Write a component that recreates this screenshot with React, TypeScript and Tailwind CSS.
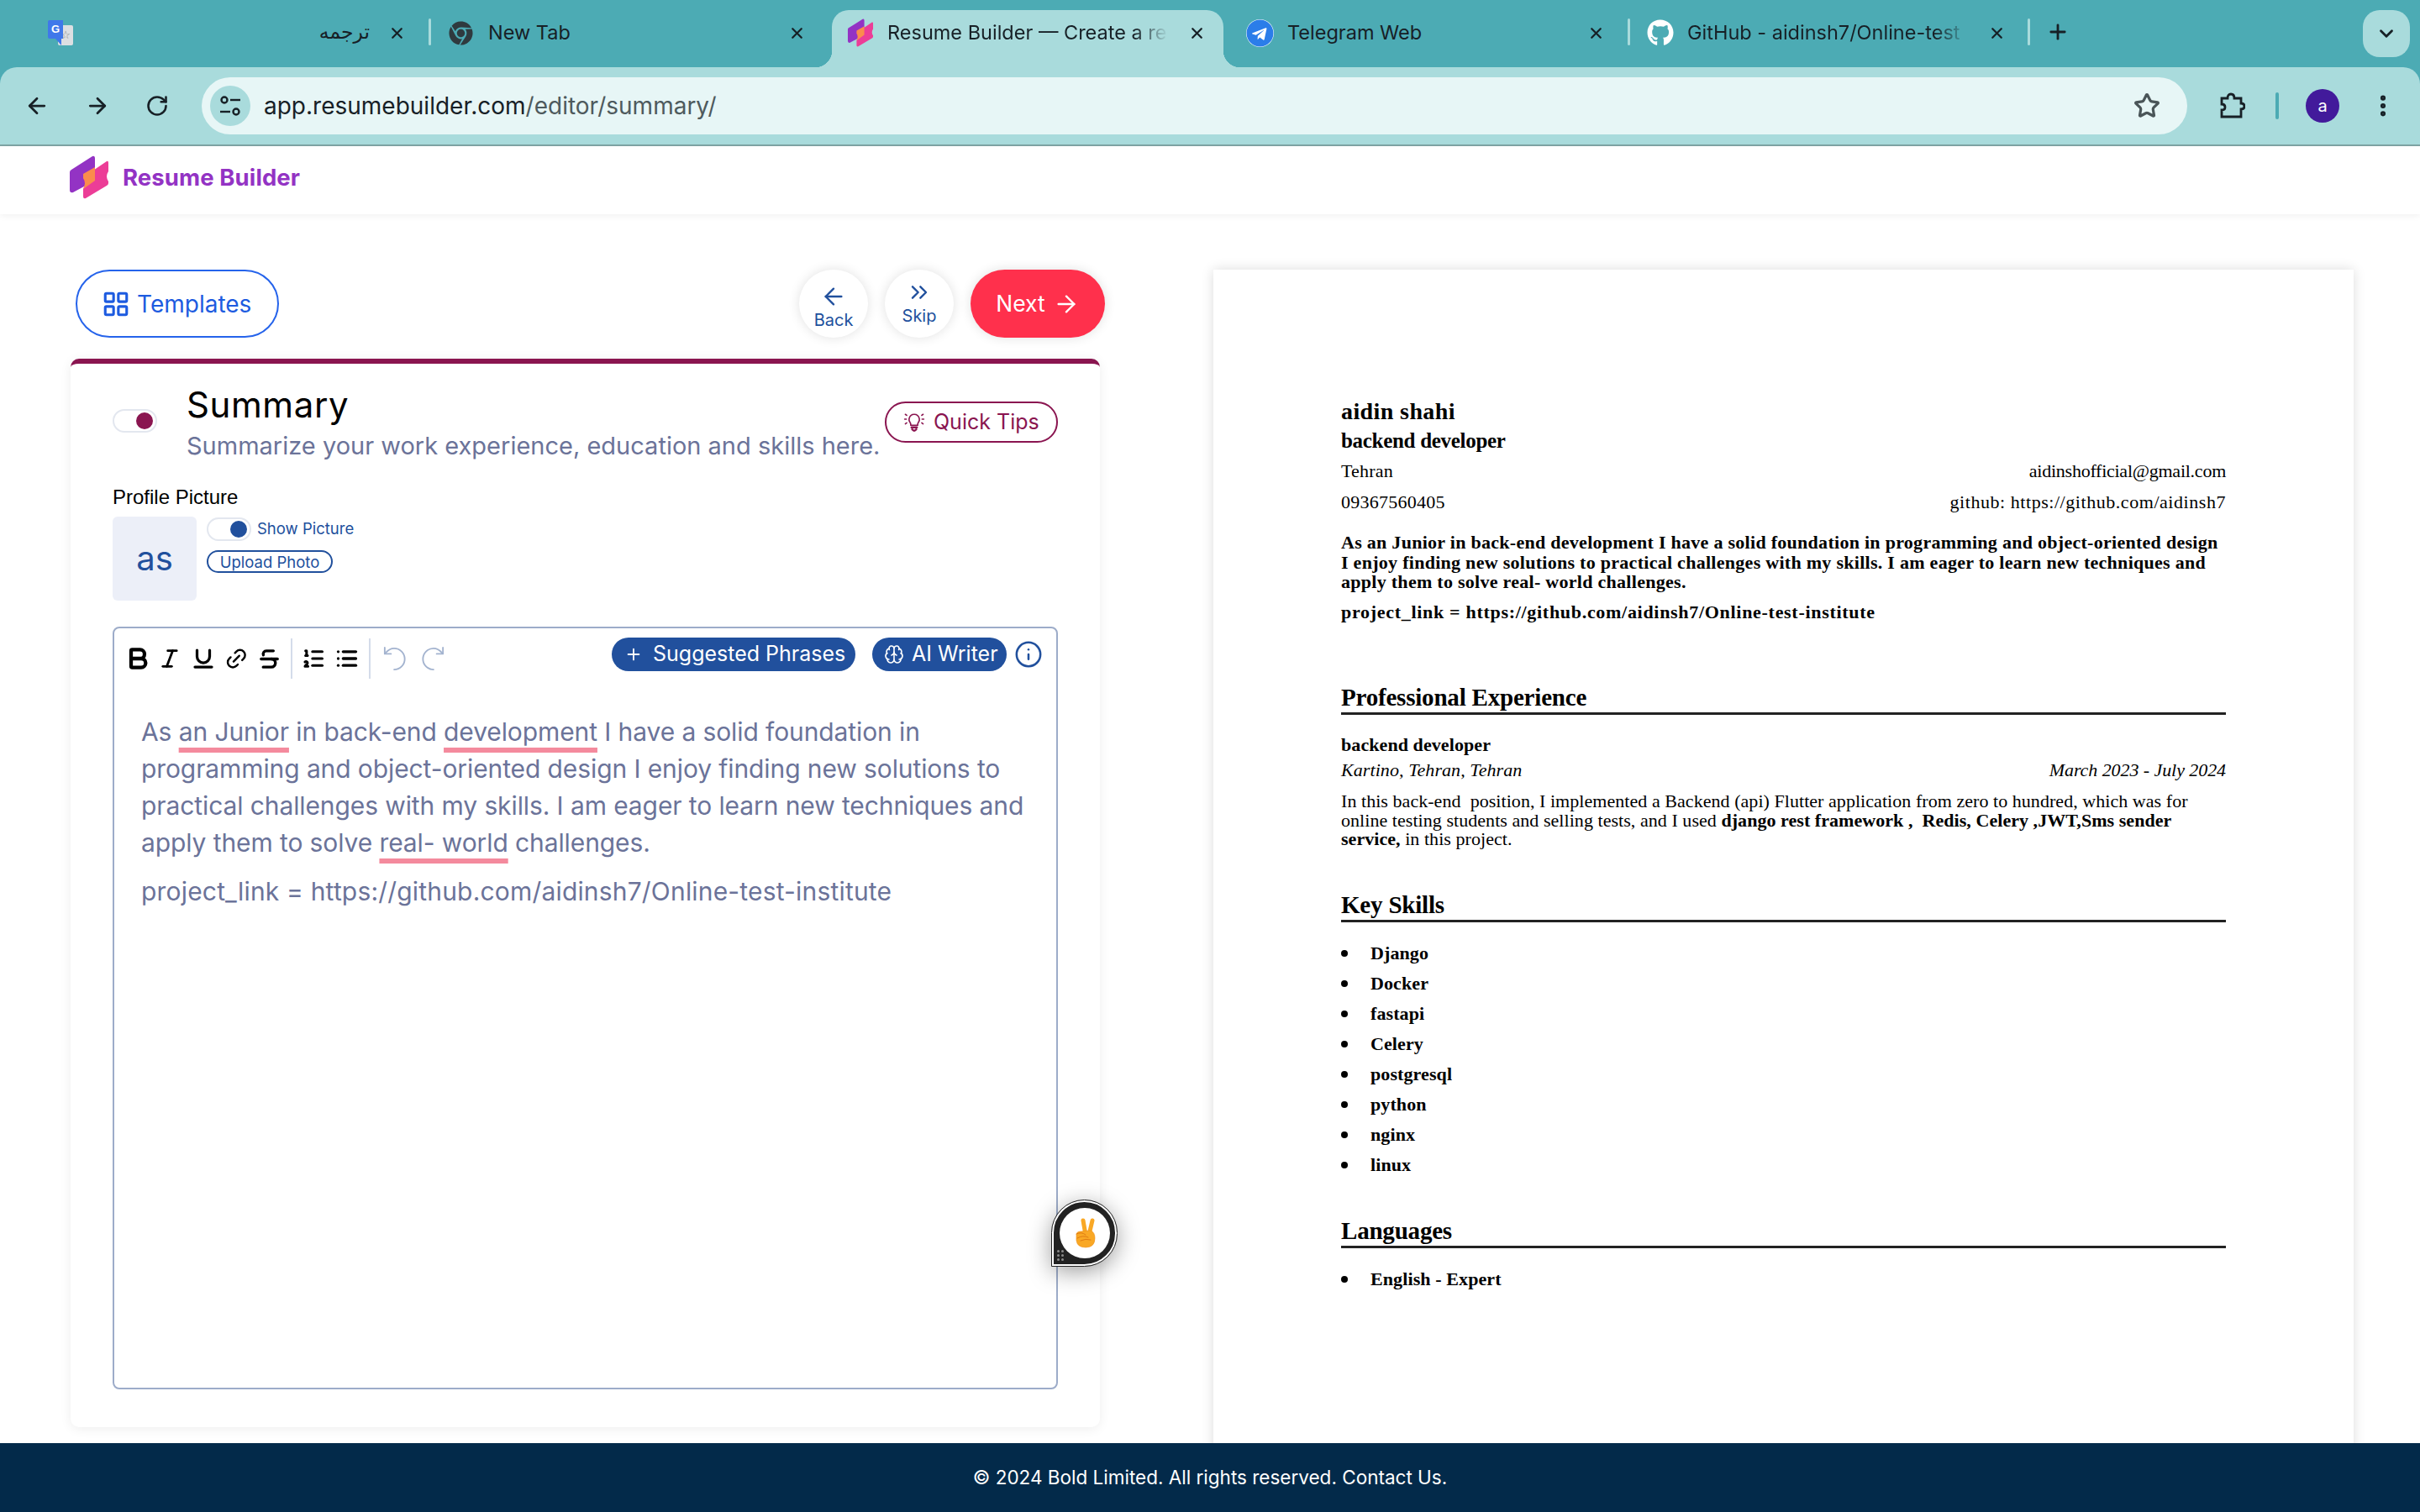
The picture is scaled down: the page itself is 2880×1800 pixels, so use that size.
import { ArrowLeft, ArrowRight, Bold, Brain, ChevronDown, ChevronsRight, Info, Italic, LayoutGrid, Link2, List, ListOrdered, MoreVertical, Plus, RotateCw, Star, Strikethrough, Underline, X } from "lucide-react";
import type { ReactNode } from "react";
import { FaChrome, FaGithub, FaTelegram } from "react-icons/fa";

const sans = "font-['Inter',sans-serif]";
const serif = "font-['Liberation_Serif',serif]";

function Logo({ className }: { className: string }) {
  return (
    <svg viewBox="0 0 46 52" className={className}>
      <path d="M2 17 L27 1 Q30 0 30 4 L30 30 L4 44 Q0 45 0 41 L0 20 Q0 18 2 17Z" fill="#9333c4" />
      <path d="M19 24 L44 7 Q46 6 46 9 L46 19 Q42 25 46 31 L46 33 Q46 35 44 36 L19 51 Q16 52 16 49 L16 40 Q20 34 16 27 Q16 25 19 24Z" fill="#ec3d97" />
      <path d="M16 22 L30 14 L30 30 L16 40 Q20 32 16 27Z" fill="#fb8c4d" />
    </svg>
  );
}

function TranslateIcon() {
  return (
    <svg viewBox="0 0 30 30" className="w-[30px] h-[30px] shrink-0">
      <rect x="12" y="6" width="18" height="24" rx="2" fill="#dcdfe2" />
      <text x="21" y="22" fontSize="13" textAnchor="middle" fill="#7d8a8c" fontFamily="DejaVu Sans">☆</text>
      <path d="M2 0 H18 V22 H16 L16 30 L9 22 H2 Q0 22 0 20 V2 Q0 0 2 0Z" fill="#3f78ea" />
      <text x="9" y="15" fontSize="13" fontWeight="700" textAnchor="middle" fill="#fff" fontFamily="Liberation Sans">G</text>
    </svg>
  );
}

function BulbIcon() {
  return (
    <svg viewBox="0 0 32 32" className="w-[32px] h-[26px] shrink-0" fill="none" stroke="#8a1550" strokeWidth="2" strokeLinecap="round">
      <path d="M11 20 Q11 17 9.500 15 Q8 13 8.500 10.500 Q10 4 16 4 Q22 4 23.500 10.500 Q24 13 22.500 15 Q21 17 21 20Z" />
      <path d="M12 23 H20 M13 26 Q16 30 19 26" strokeWidth="3" />
      <path d="M2 11 H4.500 M3 4 L5 5.500 M3 18 L5 16.500 M27.500 11 H30 M27 5.500 L29 4 M27 16.500 L29 18" />
    </svg>
  );
}

function UndoIcon({ flip }: { flip?: boolean }) {
  return (
    <svg viewBox="0 0 32 30" className={`w-[32px] h-[28px] shrink-0 ${flip ? "-scale-x-100" : ""}`} fill="none" stroke="#a3b3cf" strokeWidth="2" strokeLinecap="round" strokeLinejoin="round">
      <path d="M15 29 A13.500 13.500 0 0 0 15 2 Q9 2 4 8" />
      <path d="M3 1 V9 H11" />
    </svg>
  );
}

function Sep() {
  return <span className="w-[3px] h-[32px] bg-[#a9dbdc] rounded shrink-0" />;
}

function Tab({ icon, title, width, closeGap, iconPad, textGap, rtl, fade }: { icon: ReactNode; title: string; width: string; closeGap: string; iconPad: string; textGap: string; rtl?: boolean; fade?: boolean }) {
  return (
    <div className={`${width} ${iconPad} h-[68px] pb-[14px] flex items-center shrink-0`}>
      {icon}
      <span className={`${textGap} flex-1 min-w-0 whitespace-nowrap text-[23.5px] text-[#172026] ${rtl ? "text-right font-['DejaVu_Sans',sans-serif] text-[20px] pr-[10px]" : ""} ${fade ? "[mask-image:linear-gradient(to_right,black_88%,transparent)]" : ""}`}>
        {title}
      </span>
      <X size={21} strokeWidth={2.6} className={`${closeGap} shrink-0 text-[#172026]`} />
    </div>
  );
}

function TabStrip() {
  return (
    <div className={`${sans} h-[80px] bg-[#4cabb4] flex items-end pl-[40px] shrink-0`}>
      <Tab width="w-[470px]" iconPad="pl-[17px]" textGap="ml-[16px]" closeGap="ml-[12px] mr-[27px]" rtl icon={<TranslateIcon />} title="ترجمه" />
      <div className="h-[68px] pb-[16px] flex items-center"><Sep /></div>
      <Tab width="w-[477px]" iconPad="pl-[21px]" textGap="ml-[18px]" closeGap="mr-[31px]" icon={<FaChrome size={29} className="text-[#2f3a3e] shrink-0" />} title="New Tab" />
      <div className="relative h-[68px] w-[466px] bg-[#a9dbdc] rounded-t-[20px] shrink-0">
        <span className="absolute -left-[20px] bottom-0 w-[20px] h-[20px] bg-[radial-gradient(circle_at_0_0,#4cabb4_20px,#a9dbdc_20.5px)]" />
        <span className="absolute -right-[20px] bottom-0 w-[20px] h-[20px] bg-[radial-gradient(circle_at_100%_0,#4cabb4_20px,#a9dbdc_20.5px)]" />
        <Tab width="w-[466px]" iconPad="pl-[18px]" textGap="ml-[16px]" closeGap="ml-[24px] mr-[21px]" fade icon={<Logo className="w-[32px] h-[34px] shrink-0" />} title="Resume Builder — Create a re" />
      </div>
      <Tab width="w-[481px]" iconPad="pl-[27px]" textGap="ml-[16px]" closeGap="mr-[27px]" icon={<span className="w-[33px] h-[33px] rounded-full bg-white shrink-0 flex items-center justify-center"><FaTelegram size={33} className="text-[#2b7de9]" /></span>} title="Telegram Web" />
      <div className="h-[68px] pb-[16px] flex items-center"><Sep /></div>
      <Tab width="w-[473px]" iconPad="pl-[20px]" textGap="ml-[16px]" closeGap="ml-[24px] mr-[26px]" fade icon={<FaGithub size={32} className="text-white shrink-0" />} title="GitHub - aidinsh7/Online-test" />
      <div className="h-[68px] pb-[16px] flex items-center"><Sep /></div>
      <div className="h-[68px] pb-[16px] flex items-center ml-[19px]"><Plus size={28} strokeWidth={2.4} className="text-[#172026]" /></div>
      <div className="ml-auto mr-[12px] mb-[12px] w-[56px] h-[56px] rounded-[20px] bg-[#a9dbdc] flex items-center justify-center">
        <ChevronDown size={26} strokeWidth={2.6} className="text-[#172026]" />
      </div>
    </div>
  );
}

function AddressBar() {
  return (
    <div className={`${sans} h-[94px] shrink-0 bg-[#4cabb4]`}>
      <div className="h-full bg-[#a9dbdc] border-b-2 border-[#7fa5a5] rounded-t-[20px] flex items-center">
        <div className="w-[240px] pl-[29px] flex items-center gap-[42px] text-[#172026] shrink-0">
          <ArrowLeft size={30} strokeWidth={2.2} />
          <ArrowRight size={30} strokeWidth={2.2} />
          <RotateCw size={28} strokeWidth={2.2} />
        </div>
        <div className="w-[2363px] h-[68px] rounded-full bg-[#e7f6f6] flex items-center pl-[10px] pr-[32px] shrink-0">
          <span className="w-[48px] h-[48px] rounded-full bg-[#a9dbdc] flex items-center justify-center">
            <svg viewBox="0 0 30 30" className="w-[30px] h-[30px]" fill="none" stroke="#172026" strokeWidth="2.4">
              <circle cx="8" cy="8" r="3.5" />
              <path d="M15 8 H27" />
              <path d="M3 22 H15" />
              <circle cx="22" cy="22" r="3.5" />
            </svg>
          </span>
          <span className="ml-[16px] text-[28px] text-[#172026]">app.resumebuilder.com<span className="text-[#4e5a5d]">/editor/summary/</span></span>
          <Star size={32} strokeWidth={2.4} className="ml-auto text-[#4a5558]" />
        </div>
        <svg viewBox="0 0 32 32" className="ml-[37px] w-[32px] h-[32px]" fill="none" stroke="#172026" strokeWidth="2.8">
          <path d="M4 7 H11 Q11 2 15 2 Q19 2 19 7 H27 V13 Q31 13 31 16.500 Q31 20 27 20 V29 H4 V21 Q8 21 8 17.500 Q8 14 4 14Z" />
        </svg>
        <span className="ml-[36px] w-[4px] h-[32px] rounded bg-[#4cabb4]" />
        <span className="ml-[32px] w-[40px] h-[40px] rounded-full bg-[#421a9b] text-white text-[20px] flex items-center justify-center">a</span>
        <MoreVertical size={32} strokeWidth={2.6} className="ml-[36px] text-[#172026]" />
      </div>
    </div>
  );
}

function Toggle({ color, mt }: { color: string; mt?: string }) {
  return (
    <span className={`w-[53px] h-[28px] rounded-full border-2 border-[#e3e7ef] flex items-center justify-end pr-[3px] shrink-0 bg-white ${mt ?? ""}`}>
      <span className={`w-[20px] h-[20px] rounded-full ${color}`} />
    </span>
  );
}

function RoundButton({ icon, label, py }: { icon: ReactNode; label: string; py: string }) {
  return (
    <button className={`w-[82px] h-[81px] rounded-full bg-white shadow-[0_0_14px_rgba(0,0,0,0.12)] flex flex-col items-center text-[#21509d] text-[20px] leading-[24px] ${py}`}>
      {icon}
      {label}
    </button>
  );
}

function EditorToolbar() {
  const ic = "text-black shrink-0";
  return (
    <div className="h-[64px] mt-[4px] flex items-center pl-[13px] pr-[16px]">
      <div className="w-[30px] flex justify-center"><Bold size={32} strokeWidth={3.2} className={ic} /></div>
      <div className="w-[28px] ml-[9px] flex justify-center"><Italic size={28} strokeWidth={2.4} className={ic} /></div>
      <div className="w-[28px] ml-[12px] flex justify-center"><Underline size={30} strokeWidth={2.6} className={ic} /></div>
      <div className="w-[28px] ml-[11px] flex justify-center -rotate-45"><Link2 size={29} strokeWidth={2} className={ic} /></div>
      <div className="w-[28px] ml-[11px] flex justify-center"><Strikethrough size={29} strokeWidth={2.8} className={ic} /></div>
      <span className="ml-[12px] w-[2px] h-[48px] bg-[#d4dcea] shrink-0" />
      <div className="ml-[11px] w-[28px] flex justify-center"><ListOrdered size={28} strokeWidth={2.6} className={ic} /></div>
      <div className="ml-[12px] w-[28px] flex justify-center"><List size={28} strokeWidth={2.8} className={ic} /></div>
      <span className="ml-[12px] w-[2px] h-[48px] bg-[#d4dcea] shrink-0" />
      <div className="ml-[13px] w-[32px] flex justify-center"><UndoIcon /></div>
      <div className="ml-[13px] w-[32px] flex justify-center"><UndoIcon flip /></div>
      <button className="ml-auto w-[290px] h-[40px] rounded-full bg-[#21509d] text-white text-[25px] flex items-center pl-[15px] gap-[12px] mb-[10px]">
        <Plus size={22} strokeWidth={2} />
        <span>Suggested Phrases</span>
      </button>
      <button className="ml-[20px] w-[160px] h-[40px] rounded-full bg-[#21509d] text-white text-[25px] flex items-center pl-[14px] gap-[9px] mb-[10px]">
        <Brain size={24} strokeWidth={1.6} />
        <span>AI Writer</span>
      </button>
      <Info size={34} strokeWidth={1.8} className="ml-[9px] text-[#21509d] mb-[10px]" />
    </div>
  );
}

function LeftPanel() {
  const wavy = "underline decoration-[#f48a9d] decoration-[6px] underline-offset-[8px] [text-decoration-skip-ink:none]";
  return (
    <div className={`${sans} w-[1231px] ml-[84px] pt-[66px] shrink-0`}>
      <div className="flex items-center h-[81px]">
        <button className="ml-[6px] w-[242px] h-[81px] rounded-full border-2 border-[#2563eb] text-[#1d5be0] text-[28px] flex items-center pl-[29px] gap-[8px]">
          <LayoutGrid size={34} strokeWidth={2.2} />
          Templates
        </button>
        <div className="ml-auto flex items-center gap-[20px]">
          <RoundButton py="pt-[16px]" icon={<ArrowLeft size={32} strokeWidth={1.8} />} label="Back" />
          <RoundButton py="pt-[11px]" icon={<ChevronsRight size={32} strokeWidth={1.8} />} label="Skip" />
          <button className="w-[160px] h-[81px] rounded-full bg-[#ff304c] text-white text-[26.5px] flex items-center justify-center gap-[9px] shadow-[0_0_14px_rgba(0,0,0,0.12)]">
            Next
            <ArrowRight size={32} strokeWidth={1.8} />
          </button>
        </div>
      </div>
      <div className="mt-[25px] w-[1225px] h-[1272px] bg-white rounded-[10px] border-t-[6px] border-[#8a1550] shadow-[0_2px_14px_rgba(0,0,0,0.07)] px-[50px] pt-[24px]">
        <div className="flex">
          <Toggle color="bg-[#8a1550]" mt="mt-[30px]" />
          <div className="ml-[35px]">
            <div className="text-[42px] leading-[50px] tracking-[0.6px] text-black">Summary</div>
            <div className="mt-[4px] text-[29px] leading-[40px] text-[#6b7399] whitespace-nowrap">Summarize your work experience, education and skills here.</div>
          </div>
          <button className="ml-auto mt-[21px] w-[206px] h-[49px] shrink-0 rounded-full border-2 border-[#8a1550] text-[#8a1550] text-[25px] flex items-center pl-[17px] gap-[7px]">
            <BulbIcon />
            Quick Tips
          </button>
        </div>
        <div className="mt-[26px] text-[24px] leading-[30px] text-black font-['Liberation_Sans',sans-serif]">Profile Picture</div>
        <div className="mt-[8px] flex">
          <div className="w-[100px] h-[100px] rounded-[6px] bg-[#eceff8] text-[#21509d] text-[40px] flex items-center justify-center">as</div>
          <div className="ml-[12px]">
            <div className="flex items-center mt-[1px]">
              <Toggle color="bg-[#21509d]" />
              <span className="ml-[7px] text-[18.5px] text-[#21509d]">Show Picture</span>
            </div>
            <button className="mt-[11px] block w-[150px] h-[27px] rounded-full border-2 border-[#21509d] text-[#21509d] text-[18.5px] leading-[22px]">Upload Photo</button>
          </div>
        </div>
        <div className="mt-[31px] h-[908px] border-2 border-[#9dacc9] rounded-[8px]">
          <EditorToolbar />
          <div className="pl-[32px] pt-[33px] text-[#6b7399] text-[30px] leading-[44px] tracking-[-0.1px] whitespace-nowrap">
            <p>As <span className={wavy}>an Junior</span> in back-end <span className={wavy}>development</span> I have a solid foundation in</p>
            <p>programming and object-oriented design I enjoy finding new solutions to</p>
            <p>practical challenges with my skills. I am eager to learn new techniques and</p>
            <p>apply them to solve <span className={wavy}>real- world</span> challenges.</p>
            <p className="mt-[14px] tracking-[0.18px]">project_link = https://github.com/aidinsh7/Online-test-institute</p>
          </div>
        </div>
      </div>
    </div>
  );
}

function SectionHead({ title, mt }: { title: string; mt: string }) {
  return <div className={`${mt} h-[39px] leading-[36px] text-[29px] font-bold tracking-[-0.2px] border-b-[3px] border-[#222]`}>{title}</div>;
}

const skills = ["Django", "Docker", "fastapi", "Celery", "postgresql", "python", "nginx", "linux"];

function SkillItem({ name }: { name: string }) {
  return (
    <li className="h-[36px] flex items-center text-[22px] font-bold tracking-[0.1px]">
      <span className="w-[8px] h-[8px] rounded-full bg-black mr-[27px]" />
      {name}
    </li>
  );
}

function Paper() {
  return (
    <div className={`${serif} ml-[129px] mt-[66px] w-[1357px] h-[1500px] bg-white shadow-[0_0_14px_rgba(0,0,0,0.14)] pl-[152px] pr-[152px] pt-[151px] text-black shrink-0`}>
      <div className="text-[28px] font-bold leading-[36px] tracking-[0.4px]">aidin shahi</div>
      <div className="text-[25px] font-bold leading-[34px] tracking-[-0.3px]">backend developer</div>
      <div className="flex justify-between text-[22px] leading-[38px]"><span className="tracking-[0.2px]">Tehran</span><span className="tracking-[-0.25px]">aidinshofficial@gmail.com</span></div>
      <div className="flex justify-between text-[22px] leading-[36px]"><span className="tracking-[0.25px]">09367560405</span><span className="tracking-[0.55px]">github: https://github.com/aidinsh7</span></div>
      <div className="mt-[18px] text-[22px] font-bold leading-[23.5px] tracking-[0.28px] whitespace-nowrap">
        As an Junior in back-end development I have a solid foundation in programming and object-oriented design<br />
        I enjoy finding new solutions to practical challenges with my skills. I am eager to learn new techniques and<br />
        apply them to solve real- world challenges.
      </div>
      <div className="mt-[12px] text-[22px] font-bold leading-[23.5px] tracking-[0.7px]">project_link = https://github.com/aidinsh7/Online-test-institute</div>
      <SectionHead mt="mt-[72px]" title="Professional Experience" />
      <div className="mt-[21px] text-[22px] font-bold leading-[30px] tracking-[0.08px]">backend developer</div>
      <div className="flex justify-between text-[22px] italic leading-[30px]"><span className="tracking-[0.08px]">Kartino, Tehran, Tehran</span><span className="tracking-[-0.07px]">March 2023 - July 2024</span></div>
      <div className="mt-[11px] text-[22px] leading-[22.500px] tracking-[0.05px] whitespace-nowrap">
        In this back-end&nbsp; position, I implemented a Backend (api) Flutter application from zero to hundred, which was for<br />
        online testing students and selling tests, and I used <b>django rest framework ,&nbsp; Redis, Celery ,JWT,Sms sender</b><br />
        <b>service,</b> in this project.
      </div>
      <SectionHead mt="mt-[48px]" title="Key Skills" />
      <ul className="mt-[19px]">{skills.map((s) => <SkillItem key={s} name={s} />)}</ul>
      <SectionHead mt="mt-[42px]" title="Languages" />
      <ul className="mt-[19px]"><SkillItem name="English - Expert" /></ul>
    </div>
  );
}

function PeaceBubble() {
  return (
    <div className="absolute left-[1252px] top-[1429px] w-[77px] h-[78px] rounded-full rounded-bl-none bg-[#222] border-2 border-white outline outline-1 outline-[#222] shadow-[0_6px_28px_rgba(0,0,0,0.4)] flex items-center justify-center">
      <span className="w-[60px] h-[60px] rounded-full bg-white flex items-center justify-center">
        <svg viewBox="0 0 26 36" className="w-[26px] h-[36px]" fill="none" strokeLinecap="round">
          <path d="M11 3 L14 20" stroke="#f9a825" strokeWidth="5" />
          <path d="M22 3 L18 20" stroke="#f9a825" strokeWidth="5" />
          <path d="M3 20 Q3 16 8 16 L20 15 Q25 17 25 24 Q25 35 14 35 Q4 35 3 27Z" fill="#f9a825" stroke="#ef8e1a" strokeWidth="0.6" />
          <path d="M3 19 Q9 16 14 20 M4 24 Q11 20 17 23 M8 27 Q14 24 20 26" stroke="#e07b12" strokeWidth="1" />
        </svg>
      </span>
      <span className="absolute left-[4px] bottom-[4px] grid grid-cols-2 gap-[2px]">
        {[0, 1, 2, 3, 4, 5].map((i) => <span key={i} className="w-[3px] h-[3px] rounded-full bg-[#8a8a8a]" />)}
      </span>
    </div>
  );
}

export default function App() {
  return (
    <div className="relative w-[2880px] h-[1800px] overflow-hidden bg-white flex flex-col">
      <TabStrip />
      <AddressBar />
      <header className="h-[81px] shrink-0 bg-white shadow-[0_2px_8px_rgba(0,0,0,0.06)] flex items-center pl-[83px] relative z-10">
        <Logo className="w-[46px] h-[52px] -mt-[8px]" />
        <span className="ml-[17px] -mt-[6px] text-[27.5px] font-bold tracking-[0.1px] text-[#9333c4] font-['Inter',sans-serif]">Resume Builder</span>
      </header>
      <main className="flex-1 min-h-0 flex overflow-hidden bg-white">
        <LeftPanel />
        <Paper />
      </main>
      <footer className={`${sans} h-[82px] shrink-0 bg-[#032a4a] text-white text-[22.5px] flex items-center justify-center`}>
        © 2024 Bold Limited. All rights reserved. Contact Us.
      </footer>
      <PeaceBubble />
    </div>
  );
}
